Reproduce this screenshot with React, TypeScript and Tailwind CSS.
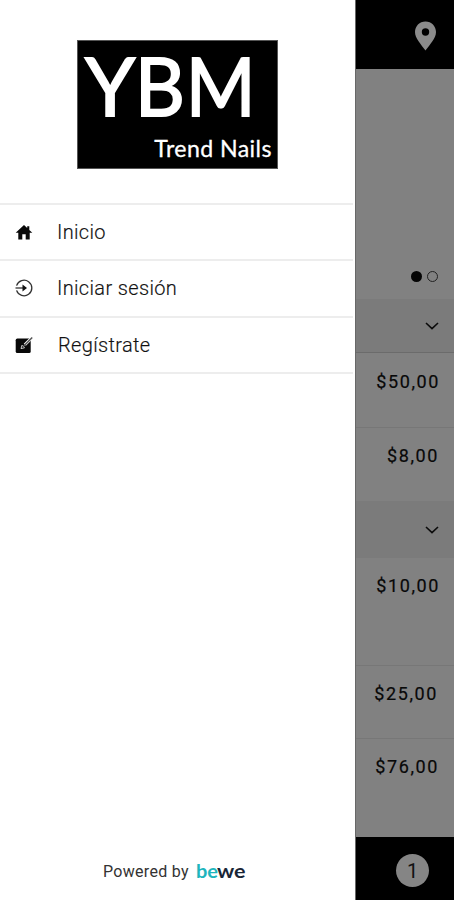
const prices = {
  first: [
    { price: "$50,00", row: "h-[74px] pt-[18px] pr-[14px]" },
    { price: "$8,00", row: "h-[74px] pt-[17px] pr-[15px] border-t border-[#777777]" },
  ],
  second: [
    { price: "$10,00", row: "h-[107px] pt-[17px] pr-[14px]" },
    { price: "$25,00", row: "h-[73px] pt-[17px] pr-[16px] border-t border-[#777777]" },
    { price: "$76,00", row: "h-[99px] pt-[17px] pr-[15px] border-t border-[#777777]" },
  ],
};

const menuItems = [
  { label: "Inicio", icon: <HomeIcon />, text: "ml-[24px]" },
  { label: "Iniciar sesión", icon: <LoginIcon />, text: "ml-[24px]" },
  { label: "Regístrate", icon: <RegisterIcon />, text: "ml-[25px]" },
];

function HomeIcon() {
  return (
    <svg width="18" height="18" viewBox="0 0 18 18" fill="#080808">
      <path d="M9 2 0.7 9.7H3.3V16.5H7.3V11.2H10.7V16.5H14.7V9.7H17.3L14.3 6.9V3.2H12.2V5Z" />
    </svg>
  );
}

function LoginIcon() {
  return (
    <svg width="18" height="18" viewBox="0 0 18 18" fill="none" stroke="#333" strokeWidth="1.3">
      <path d="M1.6 6.6A7.8 7.8 0 1 1 1.6 11.4" />
      <path d="M0.5 9H10.5" />
      <path d="M7.5 5.6 12 9 7.5 12.4Z" fill="#111" stroke="none" />
    </svg>
  );
}

function RegisterIcon() {
  return (
    <svg width="18" height="18" viewBox="0 0 18 18">
      <rect x="0.7" y="2.6" width="15" height="14.4" rx="1.6" fill="#080808" />
      <path d="M16.8 1.8 9.8 8.8" stroke="#fff" strokeWidth="3" />
      <path d="M6 12.6 7 9.2 9.5 11.8Z" fill="none" stroke="#ddd" strokeWidth="0.9" />
      <path d="M17.2 1.4 8.6 10.2" stroke="#555" strokeWidth="1.5" />
    </svg>
  );
}

function Chevron() {
  return (
    <svg width="14" height="8" viewBox="0 0 14 8" fill="none" stroke="#0b0b0b" strokeWidth="1.6">
      <path d="M1 1 7 6.6 13 1" />
    </svg>
  );
}

function Logo() {
  return (
    <svg
      width="201"
      height="129"
      viewBox="0 0 201 129"
      fill="#fff"
      fontFamily="Lato, sans-serif"
      className="overflow-visible border border-[#555] bg-black"
    >
      <g fontSize="82" stroke="#fff" strokeWidth="1.8">
        <text x="6.5" y="76" textLength="51" lengthAdjust="spacingAndGlyphs">Y</text>
        <text x="57" y="76" textLength="51" lengthAdjust="spacingAndGlyphs">B</text>
        <text x="109" y="76" textLength="71" lengthAdjust="spacingAndGlyphs">M</text>
      </g>
      <text x="77" y="117.5" fontSize="23.5" textLength="119" stroke="#fff" strokeWidth="0.3">Trend Nails</text>
    </svg>
  );
}

function PriceRow({ price, row }: { price: string; row: string }) {
  return (
    <div className={`flex items-start justify-end ${row}`}>
      <span className="text-[18px] leading-[22px] tracking-[1.6px] text-[#080808] [-webkit-text-stroke:0.2px_#080808]">
        {price}
      </span>
    </div>
  );
}

export default function App() {
  return (
    <div className="flex h-[900px] w-[454px] overflow-hidden bg-white font-[Roboto,sans-serif]">
      {/* Drawer */}
      <aside className="flex w-[355px] shrink-0 flex-col bg-white">
        <div className="flex h-[202.5px] justify-center pt-[39.5px]">
          <Logo />
        </div>
        <nav className="mr-[2px] border-t-2 border-[#ededed]">
          {menuItems.map((item) => (
            <a key={item.label} href="#" className="flex h-[56.6px] items-center border-b-2 border-[#ededed] pl-[15px]">
              {item.icon}
              <span className={`text-[20px] leading-6 font-light tracking-[0.35px] text-[#111] [-webkit-text-stroke:0.15px_#111] ${item.text}`}>
                {item.label}
              </span>
            </a>
          ))}
        </nav>
        <div className="mt-auto mb-[17px] flex h-[22px] items-center pl-[103px]">
          <span className="text-[16px] tracking-[0.3px] text-[#333]">Powered by</span>
          <svg
            width="52"
            height="22"
            viewBox="0 0 52 22"
            className="ml-[7px] overflow-visible"
            fontFamily="Lato, sans-serif"
            fontSize="19"
            fontWeight="700"
          >
            <text x="0" y="17" fill="#1fb5bd" textLength="22" lengthAdjust="spacingAndGlyphs">be</text>
            <text x="21" y="17" fill="#192536" textLength="28.5" lengthAdjust="spacingAndGlyphs">we</text>
          </svg>
        </div>
      </aside>

      {/* Dimmed page behind the drawer */}
      <main className="flex flex-1 flex-col border-l border-[#686868] bg-[#818181]">
        <header className="flex h-[69px] justify-end bg-black pt-[21px] pr-[17px]">
          <svg width="23" height="30" viewBox="0 0 23 30" fill="#8b8b8b">
            <path fillRule="evenodd" d="M11.5 0.5C5.5 0.5 1 5.2 1 11c0 6.6 6 12.2 10.5 18.5C16 23.2 22 17.6 22 11 22 5.2 17.5 0.5 11.5 0.5Zm0 14.2a3.7 3.7 0 1 1 0-7.4 3.7 3.7 0 0 1 0 7.4Z" />
          </svg>
        </header>
        <div className="flex h-[230px] items-end justify-end gap-[5px] pr-[16px] pb-[17px]">
          <span className="size-[11px] rounded-full bg-[#050505]" />
          <span className="size-[11px] rounded-full border-[1.5px] border-[#222]" />
        </div>
        <div className="flex h-[54px] items-center justify-end border-b border-[#6b6b6b] bg-[#7b7b7b] pr-[15px]">
          <Chevron />
        </div>
        {prices.first.map((p) => (
          <PriceRow key={p.price} {...p} />
        ))}
        <div className="flex h-[57px] items-center justify-end bg-[#7b7b7b] pr-[15px]">
          <Chevron />
        </div>
        {prices.second.map((p) => (
          <PriceRow key={p.price} {...p} />
        ))}
        <footer className="flex flex-1 items-start justify-end bg-black pt-[17px] pr-[25px]">
          <span className="flex size-[33px] items-center justify-center rounded-full bg-[#858585] text-[20px] text-[#111]">
            1
          </span>
        </footer>
      </main>
    </div>
  );
}
